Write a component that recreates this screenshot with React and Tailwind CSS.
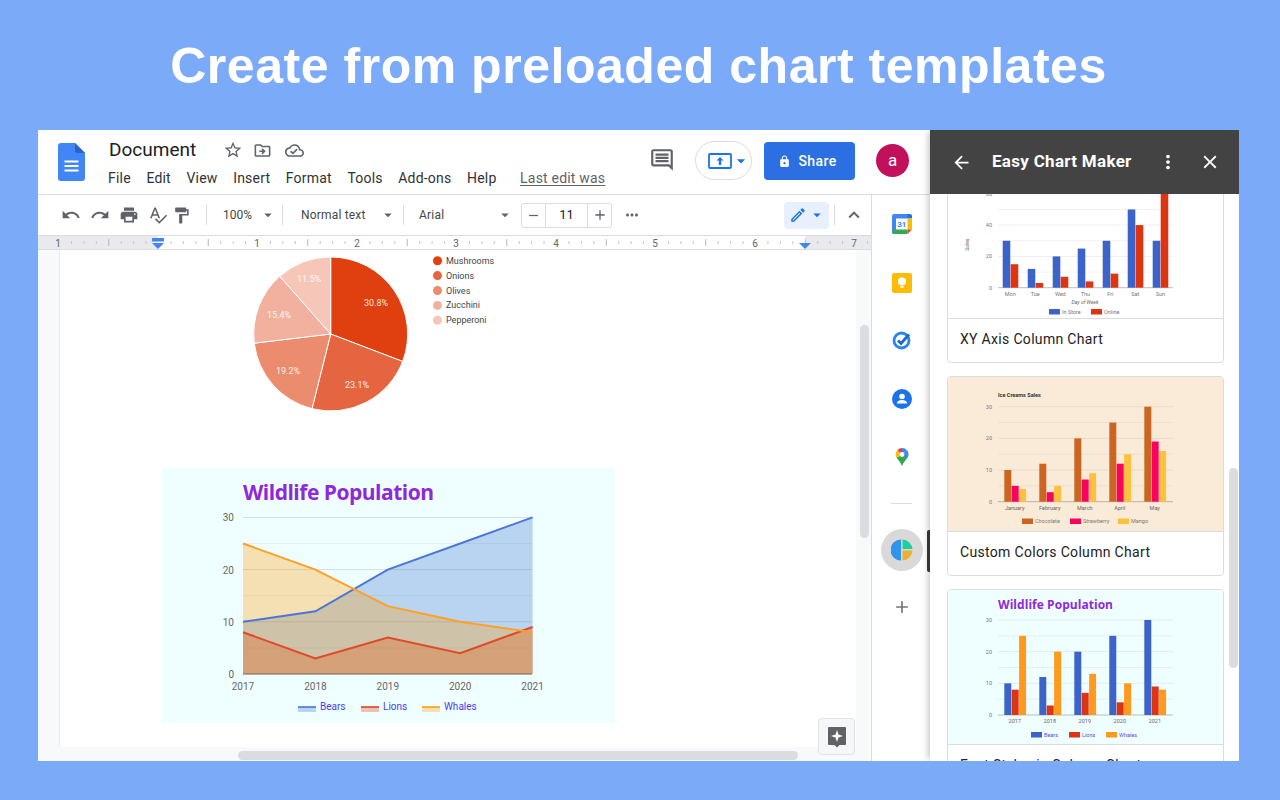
import {
  MdUndo, MdRedo, MdPrint, MdSpellcheck, MdFormatPaint, MdStarBorder, MdOutlineDriveFileMove,
  MdOutlineCloudDone, MdLock, MdArrowBack, MdMoreVert, MdClose, MdOutlineEdit, MdExpandLess,
  MdMoreHoriz, MdAdd, MdRemove, MdArrowDropDown, MdOutlineInsertComment,
} from 'react-icons/md'

const MENU = ['File', 'Edit', 'View', 'Insert', 'Format', 'Tools', 'Add-ons', 'Help']

const font = 'Roboto, "Liberation Sans", sans-serif'

function DocsLogo() {
  return (
    <svg width="27" height="38" viewBox="0 0 27 38">
      <path d="M17 0H3a3 3 0 0 0-3 3v32a3 3 0 0 0 3 3h21a3 3 0 0 0 3-3V10z" fill="#4285f4" />
      <path d="M17 0l10 10H19a2 2 0 0 1-2-2z" fill="#2a62c9" />
      <path d="M6.5 18.5h14M6.5 23h14M6.5 27.5h14" stroke="#fff" strokeWidth="2" />
    </svg>
  )
}

function Ruler() {
  const ticks = []
  for (let i = -1; i < 8; i++) {
    for (let j = 1; j < 8; j++) {
      const x = 120 + (i + j / 8) * 99.5
      if (x < 0 || x > 833) continue
      ticks.push(<rect key={`${i}-${j}`} x={x} y={j === 4 ? 3 : 5} width="1" height={j === 4 ? 7 : 3} fill={j === 4 ? '#b5b8bb' : '#c4c7ca'} />)
    }
  }
  const labels = [[20, '1'], [219, '1'], [319, '2'], [418, '3'], [518, '4'], [617, '5'], [717, '6'], [816, '7']]
  return (
    <svg width="833" height="13" viewBox="0 0 833 13" className="block">
      <rect width="833" height="13" fill="#e8eaed" />
      <rect x="120" width="647" height="13" fill="#ffffff" />
      {ticks}
      {labels.map(([x, t], i) => (
        <text key={i} x={x} y="10.500" textAnchor="middle" fontSize="10" fontFamily={font} fill="#5f6368">{t}</text>
      ))}
      <rect x="114" y="2" width="12" height="3.500" fill="#4285f4" />
      <path d="M114 7h12l-6 6z" fill="#4285f4" />
      <path d="M761 7h12l-6 6z" fill="#4285f4" />
    </svg>
  )
}

function PieChart() {
  const cx = 85.7, cy = 84, r = 77
  const data = [[30.8, '#e03f0f'], [23.1, '#e56540'], [19.2, '#ec8c6e'], [15.4, '#f2b19e'], [11.5, '#f6c7b8']]
  const labelsAt = [[131, 53, '30.8%'], [112, 135, '23.1%'], [43, 121, '19.2%'], [34, 65, '15.4%'], [64, 29, '11.5%']]
  const legend = ['Mushrooms', 'Onions', 'Olives', 'Zucchini', 'Pepperoni']
  let a = -Math.PI / 2
  const slices = data.map(([v, c]) => {
    const b = a + (v / 100) * Math.PI * 2
    const d = `M${cx} ${cy}L${cx + r * Math.cos(a)} ${cy + r * Math.sin(a)}A${r} ${r} 0 0 1 ${cx + r * Math.cos(b)} ${cy + r * Math.sin(b)}Z`
    a = b
    return <path key={c} d={d} fill={c} stroke="#fff" strokeWidth="1" />
  })
  return (
    <svg width="260" height="166" viewBox="0 0 260 166" className="block">
      {slices}
      {labelsAt.map(([x, y, t]) => (
        <text key={t} x={x} y={y + 3} textAnchor="middle" fontSize="9" fontFamily={font} fill="#fff" fillOpacity="0.9">{t}</text>
      ))}
      {legend.map((t, i) => (
        <g key={t}>
          <circle cx="192.500" cy={10.7 + i * 14.9} r="4.500" fill={data[i][1]} />
          <text x="201" y={13.7 + i * 14.9} fontSize="9" fontFamily={font} fill="#444">{t}</text>
        </g>
      ))}
    </svg>
  )
}

function WildlifeChart() {
  const x = (i) => 81 + i * 72.4
  const y = (v) => 206 - v * 5.22
  const series = [
    { c: '#3c6fd0', l: '#4c76d6', v: [10, 12, 20, 25, 30] },
    { c: '#dc3912', l: '#e04a28', v: [8, 3, 7, 4, 9] },
    { c: '#ff9900', l: '#ffa024', v: [25, 20, 13, 10, 8] },
  ]
  const years = ['2017', '2018', '2019', '2020', '2021']
  const legend = [[136, 158, 'Bears', '#3c6fd0'], [199, 221, 'Lions', '#dc3912'], [260, 282, 'Whales', '#ff9900']]
  return (
    <svg width="453" height="255" viewBox="0 0 453 255" className="block bg-[#efffff]">
      {[0, 5, 10, 15, 20, 25, 30].map((v) => (
        <line key={v} x1="81" x2="370" y1={y(v)} y2={y(v)} stroke={v % 10 ? '#e6eeee' : '#d6dddd'} />
      ))}
      {[0, 10, 20, 30].map((v) => (
        <text key={v} x="72" y={y(v) + 4} textAnchor="end" fontSize="10" fontFamily={font} fill="#666">{v}</text>
      ))}
      {series.map((s) => (
        <path key={s.c} d={`M${x(0)} ${y(0)}${s.v.map((v, i) => `L${x(i)} ${y(v)}`).join('')}L${x(4)} ${y(0)}Z`} fill={s.c} fillOpacity="0.3" />
      ))}
      {series.map((s) => (
        <path key={s.l} d={s.v.map((v, i) => `${i ? 'L' : 'M'}${x(i)} ${y(v)}`).join('')} fill="none" stroke={s.l} strokeWidth="2" />
      ))}
      <line x1="81" x2="370" y1={y(0)} y2={y(0)} stroke="#7d6a5a" />
      {years.map((t, i) => (
        <text key={t} x={x(i)} y="222" textAnchor="middle" fontSize="10" fontFamily={font} fill="#666">{t}</text>
      ))}
      <text x="81" y="32" fontSize="21" fontWeight="700" fontFamily='"Open Sans", sans-serif' fill="#8f28dc" textLength="191">Wildlife Population</text>
      {legend.map(([x1, tx, t, c]) => (
        <g key={t}>
          <rect x={x1} y="239" width="18" height="5" fill={c} fillOpacity="0.3" />
          <line x1={x1} x2={x1 + 18} y1="239" y2="239" stroke={c} strokeWidth="1.500" />
          <text x={tx} y="242" fontSize="10" fontFamily={font} fill="#4a3cf0">{t}</text>
        </g>
      ))}
    </svg>
  )
}

function ColumnChart({ groups, series, y0, yUnit, yTicks, minor, left, step, barW, title, legend, legendColor, xAxis, yAxis, labelColor = '#777', legendY = 150, catY, gridX1 = 50 }) {
  return (
    <svg width="275" height="154" viewBox="0 0 275 154" className="block">
      {minor.map((v) => (
        <line key={`m${v}`} x1={gridX1} x2="225" y1={y0 - v * yUnit} y2={y0 - v * yUnit} stroke="#000" strokeOpacity="0.05" />
      ))}
      {yTicks.map((v) => (
        <g key={v}>
          <line x1={gridX1} x2="225" y1={y0 - v * yUnit} y2={y0 - v * yUnit} stroke="#000" strokeOpacity={v ? 0.07 : 0.25} />
          <text x={gridX1 - 6} y={y0 - v * yUnit + 2} textAnchor="end" fontSize="5.500" fontFamily={font} fill="#777">{v}</text>
        </g>
      ))}
      {groups.map((g, i) => (
        <g key={g}>
          {series.map((s, k) => {
            const h = s.v[i] * yUnit
            return <rect key={s.c} x={left + i * step + k * (barW + 0.400)} y={y0 - h} width={barW} height={h} fill={s.c} />
          })}
          <text x={left + i * step + (series.length * barW) / 2} y={catY} textAnchor="middle" fontSize="5.500" fontFamily={font} fill={labelColor}>{g}</text>
        </g>
      ))}
      {title}
      {xAxis && <text x="137" y={y0 + 16} textAnchor="middle" fontSize="5" fontStyle="italic" fontFamily={font} fill="#666">{xAxis}</text>}
      {yAxis && <text transform={`translate(21 ${y0 - 43}) rotate(-90)`} textAnchor="middle" fontSize="5" fontFamily={font} fill="#666">{yAxis}</text>}
      {legend.map(([x, t], i) => (
        <g key={t}>
          <rect x={x} y={legendY - 3} width="11" height="5.500" fill={series[i].c} />
          <text x={x + 13} y={legendY + 1.500} fontSize="5.500" fontFamily={font} fill={legendColor}>{t}</text>
        </g>
      ))}
    </svg>
  )
}

function Card({ label, bg, children }) {
  return (
    <div className="w-[277px] shrink-0 rounded-[4px] border border-[#dadce0] bg-white overflow-hidden">
      <div className={`h-[155px] border-b border-[#dadce0] ${bg}`}>{children}</div>
      <div className="h-[43px] pb-[2px] flex items-center pl-[12px] text-[14px] tracking-[0.32px] text-[#222]">{label}</div>
    </div>
  )
}

function ToolBtn({ children, className = '' }) {
  return <span className={`flex items-center justify-center text-[#5f6368] ${className}`}>{children}</span>
}

function Divider({ className = '' }) {
  return <span className={`block shrink-0 w-px h-[20px] bg-[#dadce0] ${className}`} />
}

function SideApps() {
  return (
    <div className="w-[59px] shrink-0 border-l border-[#dadce0] bg-white flex flex-col items-center relative">
      <svg width="20" height="20" viewBox="0 0 20 20" className="mt-[19px] ml-[1px]">
        <rect width="20" height="20" rx="2" fill="#fff" />
        <path d="M0 2a2 2 0 0 1 2-2h2v20H2a2 2 0 0 1-2-2z" fill="#4285f4" />
        <path d="M2 0h14v4.500H2z" fill="#4285f4" />
        <path d="M15.500 0H18a2 2 0 0 1 2 2v2.500h-4.500z" fill="#1a73e8" />
        <path d="M15.500 4.500H20v11h-4.500z" fill="#fbbc04" />
        <path d="M2 15.500h13.500V20H2a2 2 0 0 1-2-2z" fill="#34a853" />
        <path d="M15.500 15.500H20L15.500 20z" fill="#ea4335" />
        <text x="9.800" y="13" textAnchor="middle" fontSize="8" fontWeight="700" fontFamily={font} fill="#4285f4">31</text>
      </svg>
      <svg width="20" height="20" viewBox="0 0 20 20" className="mt-[39px] ml-[1px]">
        <rect width="20" height="20" rx="2" fill="#fbbc04" />
        <circle cx="10" cy="8.500" r="4" fill="#fff" />
        <rect x="8.500" y="13" width="3" height="1.800" fill="#fff" />
      </svg>
      <svg width="20" height="20" viewBox="0 0 20 20" className="mt-[37px] ml-[1px]">
        <circle cx="9.500" cy="10.500" r="7.500" fill="none" stroke="#2a84f0" strokeWidth="2.800" />
        <path d="M6 10.500l3 3 8-9" fill="none" stroke="#1967d2" strokeWidth="2.800" />
      </svg>
      <svg width="20" height="20" viewBox="0 0 20 20" className="mt-[39px] ml-[1px]">
        <circle cx="10" cy="10" r="10" fill="#1a73e8" />
        <circle cx="10" cy="7.500" r="2.800" fill="#fff" />
        <path d="M4.800 14.500c0-2.500 3.200-3.500 5.200-3.500s5.200 1 5.200 3.500z" fill="#fff" />
      </svg>
      <svg width="14" height="18" viewBox="0 0 14 18" className="mt-[39px] ml-[1px]">
        <path d="M7 18c-1-3-3-5-5.500-8.500L7 7z" fill="#34a853" />
        <path d="M1.500 9.500A6.500 6.500 0 0 1 2.500 2L7 7z" fill="#fbbc04" />
        <path d="M2.500 2A6.500 6.500 0 0 1 7 0l1 5-1 2z" fill="#ea4335" />
        <path d="M7 0a6.500 6.500 0 0 1 5 2.300L7 7z" fill="#4285f4" />
        <path d="M12 2.300c1.700 2.400 1.700 4.800.5 7.200C10.500 12.500 8 15 7 18l-2-8z" fill="#34a853" />
        <path d="M12 2.300c1.700 2.400 1.700 4.800.5 7.200L7 7z" fill="#4285f4" />
        <circle cx="7" cy="6.500" r="2.400" fill="#fff" />
      </svg>
      <span className="w-[21px] h-px bg-[#dadce0] mt-[37px] ml-[1px]" />
      <span className="w-[42px] h-[42px] rounded-full bg-[#d9d9d9] flex items-center justify-center mt-[25px] ml-[1px]">
        <svg width="22" height="22" viewBox="0 0 22 22">
          <path d="M10 0.500v21a10.500 10.500 0 0 1 0-21z" fill="#2f95ea" />
          <path d="M11.500 0.500A10.500 10.500 0 0 1 21.500 10h-10z" fill="#20cfa0" />
          <path d="M11.500 11.500h10a10.500 10.500 0 0 1-10 10z" fill="#efb02f" />
        </svg>
      </span>
      <MdAdd size={20} className="mt-[26px] ml-[1px] text-[#70757a]" />
      <span className="absolute right-0 top-[335px] w-[3px] h-[42px] bg-[#3c3c3c] rounded-l-[2px]" />
    </div>
  )
}

export default function App() {
  const grid5 = [5, 15, 25]
  return (
    <div className="w-[1280px] h-[800px] overflow-hidden bg-[#7baaf9] flex flex-col" style={{ fontFamily: font }}>
      <h1 className="h-[130px] pt-[2px] pr-[3px] flex items-center justify-center text-[50px] font-bold tracking-[0.53px] text-white" style={{ fontFamily: '"Liberation Sans", Arial, sans-serif' }}>
        Create from preloaded chart templates
      </h1>

      <div className="ml-[38px] w-[1201px] h-[631px] bg-white flex overflow-hidden">
        <div className="w-[892px] shrink-0 flex flex-col">
          {/* docs title bar */}
          <header className="h-[65px] shrink-0 border-b border-[#dadce0] flex items-start">
            <div className="ml-[20px] mt-[13px]"><DocsLogo /></div>
            <div className="ml-[23px] flex-1 min-w-0">
              <div className="flex items-center h-[20px] mt-[10px] pl-[1px]">
                <span className="text-[19px] leading-[20px] text-[#202124] w-[114px]">Document</span>
                <MdStarBorder size={20} className="text-[#5f6368]" />
                <MdOutlineDriveFileMove size={19} className="ml-[10px] text-[#5f6368]" />
                <MdOutlineCloudDone size={19} className="ml-[13px] text-[#5f6368]" />
              </div>
              <nav className="flex items-center h-[20px] mt-[8px] text-[14px] leading-[20px] tracking-[0.2px] text-[#303236] gap-x-[15.600px]">
                {MENU.map((m) => <span key={m}>{m}</span>)}
                <span className="ml-[8px] text-[#5f6368] underline underline-offset-2">Last edit was</span>
              </nav>
            </div>
            <MdOutlineInsertComment size={26} className="mt-[17px] mr-[20px] text-[#5f6368]" />
            <div className="mt-[11px] w-[57px] h-[39px] rounded-full border border-[#dadce0] flex items-center pl-[12px]">
              <svg width="24" height="16" viewBox="0 0 24 16">
                <rect x="1" y="1" width="22" height="14" rx="1" fill="none" stroke="#1a73e8" strokeWidth="1.800" />
                <path d="M12 4l3.500 3.500h-2.300V12h-2.400V7.500H8.500z" fill="#1a73e8" />
              </svg>
              <MdArrowDropDown size={20} className="-ml-px text-[#1a73e8]" />
            </div>
            <div className="mt-[12px] ml-[12px] w-[91px] h-[38px] pr-[4px] rounded-[4px] bg-[#2b6fe2] text-white flex items-center justify-center gap-[7px] text-[14px] font-medium tracking-[0.4px]">
              <MdLock size={13} />Share
            </div>
            <div className="mt-[14px] ml-[21px] mr-[21px] w-[33px] h-[33px] rounded-full bg-[#c2105c] text-white flex items-center justify-center text-[17px]">a</div>
          </header>

          <div className="flex flex-1 min-h-0">
            <div className="w-[833px] shrink-0 flex flex-col relative overflow-hidden">
              {/* toolbar */}
              <div className="h-[40px] shrink-0 flex items-center text-[12px] text-[#444746]">
                <ToolBtn className="ml-[23px]"><MdUndo size={20} /></ToolBtn>
                <ToolBtn className="ml-[9px]"><MdRedo size={20} /></ToolBtn>
                <ToolBtn className="ml-[9px]"><MdPrint size={20} /></ToolBtn>
                <ToolBtn className="ml-[9px]"><MdSpellcheck size={20} /></ToolBtn>
                <ToolBtn className="ml-[4px]"><MdFormatPaint size={19} /></ToolBtn>
                <Divider className="ml-[15px]" />
                <span className="ml-[16px] w-[36px]">100%</span>
                <MdArrowDropDown size={18} className="text-[#5f6368]" />
                <Divider className="ml-[5px]" />
                <span className="ml-[18px] w-[78px] tracking-[0.18px]">Normal text</span>
                <MdArrowDropDown size={18} className="text-[#5f6368]" />
                <Divider className="ml-[6px]" />
                <span className="ml-[15px] w-[77px] tracking-[0.2px]">Arial</span>
                <MdArrowDropDown size={18} className="text-[#5f6368]" />
                <div className="ml-[7px] w-[91px] h-[25px] border border-[#dadce0] rounded-[3px] flex items-center text-[13px] text-[#202124]">
                  <span className="w-[24px] h-full flex items-center justify-center border-r border-[#dadce0]"><MdRemove size={15} className="text-[#5f6368]" /></span>
                  <span className="flex-1 text-center">11</span>
                  <span className="w-[24px] h-full flex items-center justify-center border-l border-[#dadce0]"><MdAdd size={16} className="text-[#5f6368]" /></span>
                </div>
                <MdMoreHoriz size={18} className="ml-[11px] text-[#5f6368]" />
                <div className="ml-[143px] w-[45px] h-[27px] rounded-[4px] bg-[#e8f0fe] flex items-center pl-[5px] text-[#1a73e8]">
                  <MdOutlineEdit size={18} />
                  <MdArrowDropDown size={18} className="ml-px" />
                </div>
                <Divider className="ml-[5px]" />
                <MdExpandLess size={22} className="ml-[8px] text-[#5f6368]" />
              </div>
              <div className="shrink-0 border-y border-[#dadce0]"><Ruler /></div>

              {/* page */}
              <div className="flex-1 min-h-0 bg-[#f8f9fa] pl-[21px] pr-[15px] pb-[14px]">
                <div className="h-full bg-white border-l border-[#e8eaed] overflow-hidden">
                  <div className="ml-[185px]"><PieChart /></div>
                  <div className="ml-[102px] mt-[52px]"><WildlifeChart /></div>
                </div>
              </div>

              <span className="absolute left-[822px] top-[130px] w-[9px] h-[213px] rounded-full bg-[#dadce0]" />
              <span className="absolute left-[200px] top-[556px] w-[560px] h-[9px] rounded-full bg-[#dadce0]" />
              <div className="absolute left-[780px] top-[523px] w-[37px] h-[37px] rounded-[4px] bg-[#f6f7f8] border border-[#e2e3e5] flex items-center justify-center">
                <svg width="20" height="22" viewBox="0 0 20 22">
                  <path d="M2 1h16a1 1 0 0 1 1 1v16a1 1 0 0 1-1 1h-5.500L10 21.500 7.500 19H2a1 1 0 0 1-1-1V2a1 1 0 0 1 1-1z" fill="#5f6368" />
                  <path d="M10 4l1.500 4.500L16 10l-4.500 1.500L10 16l-1.500-4.500L4 10l4.500-1.500z" fill="#fff" />
                </svg>
              </div>
            </div>
            <SideApps />
          </div>
        </div>

        {/* add-on panel */}
        <aside className="w-[309px] shrink-0 flex flex-col relative shadow-[-4px_0_6px_-2px_rgba(0,0,0,0.22)]">
          <div className="h-[64px] shrink-0 bg-[#434343] text-white flex items-center relative z-10">
            <MdArrowBack size={21} className="ml-[21px]" />
            <span className="ml-[20px] w-[166px] text-[17px] font-bold tracking-[0.3px]">Easy Chart Maker</span>
            <MdMoreVert size={22} className="ml-[-1px]" />
            <MdClose size={22} className="ml-[20px]" />
          </div>
          <div className="flex-1 min-h-0 overflow-hidden relative">
            <div className="ml-[17px] mt-[-31px] flex flex-col gap-[13px]">
              <Card label="XY Axis Column Chart" bg="bg-white">
                <ColumnChart
                  groups={['Mon', 'Tue', 'Wed', 'Thu', 'Fri', 'Sat', 'Sun']}
                  series={[
                    { c: '#3c64c8', v: [30, 12, 20, 25, 30, 50, 30] },
                    { c: '#dd3411', v: [15, 3, 7, 4, 9, 40, 60] },
                  ]}
                  y0={123.700} yUnit={1.565} yTicks={[0, 20, 40, 60]} minor={[10, 30, 50]}
                  left={54.700} step={25} barW={7.600} catY={132}
                  xAxis="Day of Week" yAxis="Sales" legendY={148}
                  legend={[[101, 'In Store'], [143, 'Online']]} legendColor="#777"
                />
              </Card>
              <Card label="Custom Colors Column Chart" bg="bg-[#faebd9]">
                <ColumnChart
                  groups={['January', 'February', 'March', 'April', 'May']}
                  series={[
                    { c: '#cc6522', v: [10, 12, 20, 25, 30] },
                    { c: '#f9035e', v: [5, 3, 7, 12, 19] },
                    { c: '#ffc13d', v: [4, 5, 9, 15, 16] },
                  ]}
                  y0={124.700} yUnit={3.167} yTicks={[0, 10, 20, 30]} minor={[5, 15, 25]}
                  left={56.300} step={35} barW={7} catY={133} labelColor="#666"
                  legendY={144.500}
                  legend={[[74, 'Chocolate'], [122, 'Strawberry'], [170, 'Mango']]} legendColor="#777"
                  title={<text x="50" y="20" fontSize="5.500" fontWeight="700" fontFamily={font} fill="#333">Ice Creams Sales</text>}
                />
              </Card>
              <Card label="Font Styles in Column Chart" bg="bg-[#efffff]">
                <ColumnChart
                  groups={['2017', '2018', '2019', '2020', '2021']}
                  series={[
                    { c: '#3c64c8', v: [10, 12, 20, 25, 30] },
                    { c: '#dd3411', v: [8, 3, 7, 4, 9] },
                    { c: '#ff9a1e', v: [25, 20, 13, 10, 8] },
                  ]}
                  y0={125} yUnit={3.167} yTicks={[0, 10, 20, 30]} minor={grid5}
                  left={56.300} step={35} barW={7} catY={133} labelColor="#666"
                  legendY={145}
                  legend={[[83, 'Bears'], [121, 'Lions'], [158, 'Whales']]} legendColor="#5a48ee"
                  title={<text x="50" y="19" fontSize="12" fontWeight="700" fontFamily='"Open Sans", sans-serif' fill="#8f28dc" textLength="115">Wildlife Population</text>}
                />
              </Card>
            </div>
            <span className="absolute right-px top-[274px] w-[9px] h-[200px] rounded-full bg-[#dadce0]" />
          </div>
        </aside>
      </div>
    </div>
  )
}
